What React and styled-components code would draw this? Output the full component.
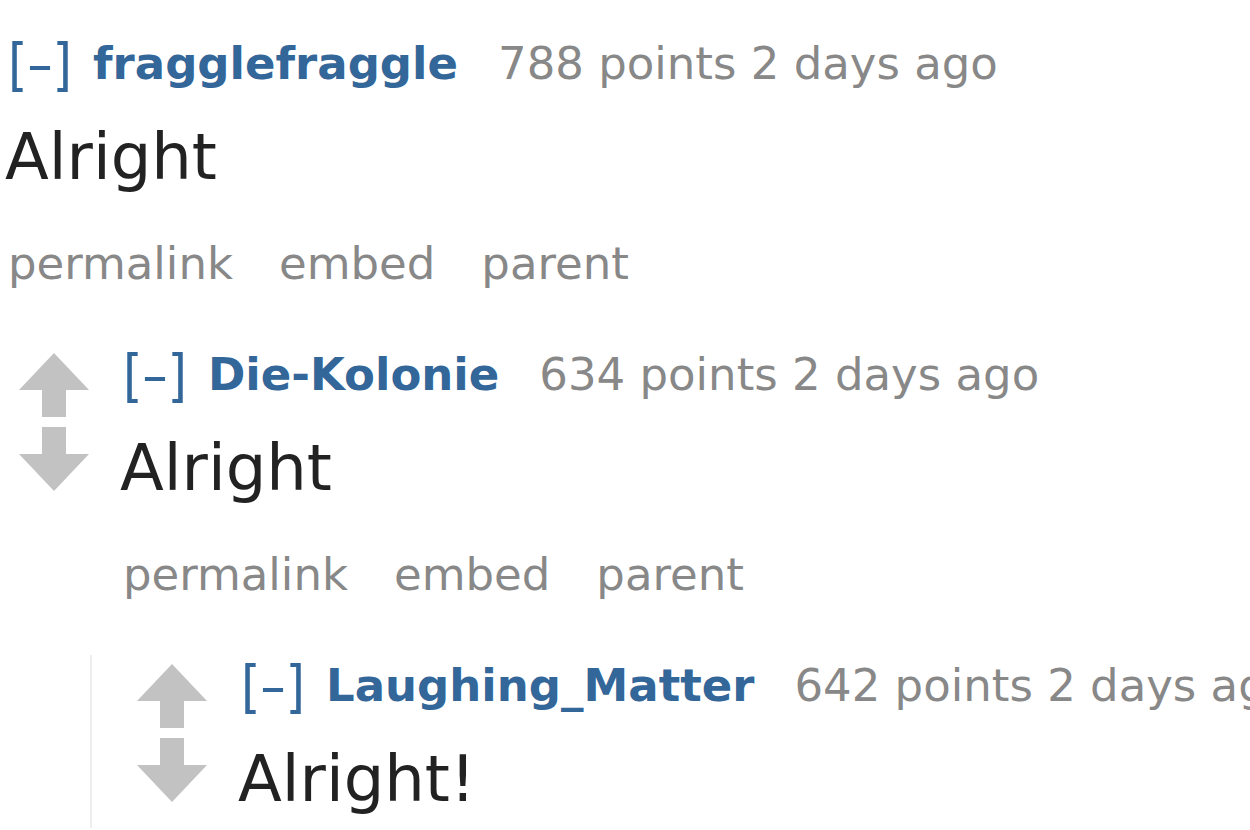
import React from 'react';
import styled, { createGlobalStyle } from 'styled-components';

const GlobalStyle = createGlobalStyle`
   html, body {
      margin: 0;
      padding: 0;
      background: #ffffff;
      overflow: hidden;
   }
   body {
      font-family: 'DejaVu Sans', Verdana, sans-serif;
   }
`;

const Page = styled.div`
   width: 1250px;
   height: 830px;
   overflow: hidden;
   padding: 34px 0 0 8px;
   box-sizing: border-box;
`;

const CommentRow = styled.div`
   display: flex;
   flex-direction: row;
   align-items: flex-start;
`;

const Midcol = styled.div`
   display: flex;
   flex-direction: column;
   align-items: center;
   gap: 10px;
   width: 72px;
   flex: 0 0 72px;
   margin-top: 8px;
   margin-right: 33px;
`;

const Entry = styled.div`
   display: flex;
   flex-direction: column;
   min-width: 0;
`;

const Tagline = styled.div`
   font-size: 45px;
   line-height: 60px;
   height: 60px;
   white-space: nowrap;
   color: #888888;
`;

const Expand = styled.span`
   display: inline-block;
   color: #336699;
   font-size: 50px;
   line-height: 50px;
   transform: scaleY(1.15) translateY(2px);
   margin-right: 21px;
`;

const Author = styled.span`
   color: #336699;
   font-weight: bold;
   margin-right: 40px;
`;

const Body = styled.div`
   font-size: 64px;
   line-height: 98px;
   margin: 14px 0 0 -3px;
   color: #222222;
   white-space: nowrap;
`;

const Buttons = styled.ul`
   display: flex;
   gap: 46px;
   list-style: none;
   margin: 13px 0 0;
   padding: 0;
   font-size: 45px;
   line-height: 90px;
   color: #888888;
`;

const Child = styled.div`
   margin-top: 35px;
   padding-top: 1px;
   margin-left: ${(p) => p.$indent}px;
   padding-left: ${(p) => p.$pad}px;
   border-left: ${(p) => (p.$line ? '2px solid #eeeeee' : 'none')};
`;

const Arrow = ({ down }) => (
   <svg width="70" height="64" viewBox="0 0 70 64" style={down ? { transform: 'scaleY(-1)' } : undefined}>
      <polygon points="35,0 70,37 47,37 47,64 23,64 23,37 0,37" fill="#c2c2c2" />
   </svg>
);

const Comment = ({ comment, voting }) => (
   <CommentRow>
      {voting && (
         <Midcol>
            <Arrow />
            <Arrow down />
         </Midcol>
      )}
      <Entry>
         <Tagline>
            <Expand>[–]</Expand>
            <Author>{comment.author}</Author>
            {comment.points} points {comment.age}
         </Tagline>
         <Body>{comment.body}</Body>
         {comment.buttons && (
            <Buttons>
               <li>permalink</li>
               <li>embed</li>
               <li>parent</li>
            </Buttons>
         )}
         {comment.child && (
            <Child $indent={comment.childIndent} $pad={comment.childPad} $line={comment.childLine}>
               <Comment comment={comment.child} voting />
            </Child>
         )}
      </Entry>
   </CommentRow>
);

const thread = {
   author: 'fragglefraggle',
   points: 788,
   age: '2 days ago',
   body: 'Alright',
   buttons: true,
   childIndent: 10,
   childPad: 0,
   childLine: false,
   child: {
      author: 'Die-Kolonie',
      points: 634,
      age: '2 days ago',
      body: 'Alright',
      buttons: true,
      childIndent: -33,
      childPad: 44,
      childLine: true,
      child: {
         author: 'Laughing_Matter',
         points: 642,
         age: '2 days ago',
         body: 'Alright!',
         buttons: false,
      },
   },
};

export default function App() {
   return (
      <>
         <GlobalStyle />
         <Page>
            <Comment comment={thread} />
         </Page>
      </>
   );
}
